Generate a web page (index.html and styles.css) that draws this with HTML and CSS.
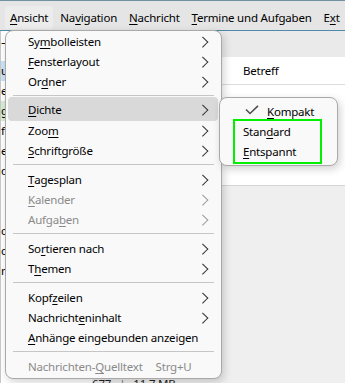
FILE: index.html
```html
<!DOCTYPE html>
<html lang="de">
<head>
<meta charset="utf-8">
<link rel="stylesheet" href="styles.css">
</head>
<body>
<div class="app">
  <div class="menubar">
    <span class="mb-item open"><u>A</u>nsicht</span>
    <span class="mb-item">Na<u>v</u>igation</span>
    <span class="mb-item"><u>N</u>achricht</span>
    <span class="mb-item"><u>T</u>ermine und Aufgaben</span>
    <span class="mb-item">E<u>x</u>t</span>
  </div>
  <div class="panes">
    <div class="folders">
      <div class="f-row">–</div>
      <div class="f-row gap"></div>
      <div class="f-row sel">u</div>
      <div class="f-row">e</div>
      <div class="f-row green">g</div>
      <div class="f-row">f</div>
      <div class="f-row">e</div>
      <div class="f-row">d</div>
      <div class="f-row"></div>
      <div class="f-row"></div>
      <div class="f-row">c</div>
      <div class="f-row">c</div>
      <div class="f-row">n</div>
    </div>
    <div class="threads">
      <div class="toolbar"></div>
      <div class="colheader"><span class="col-subject">Betreff</span></div>
      <div class="rows"></div>
      <div class="preview"></div>
      <div class="status"><span>677</span><span class="sep">|</span><span>11.7 MB</span></div>
    </div>
  </div>

  <div class="menu main-menu">
    <div class="mi">Sy<u>m</u>bolleisten<span class="arrow"></span></div>
    <div class="mi"><u>F</u>ensterlayout<span class="arrow"></span></div>
    <div class="mi">Or<u>d</u>ner<span class="arrow"></span></div>
    <div class="msep"></div>
    <div class="mi hl"><span><u>D</u>ichte</span><span class="arrow"></span></div>
    <div class="mi">Zoo<u>m</u><span class="arrow"></span></div>
    <div class="mi"><u>S</u>chriftgröße<span class="arrow"></span></div>
    <div class="msep"></div>
    <div class="mi"><u>T</u>agesplan<span class="arrow"></span></div>
    <div class="mi dis"><u>K</u>alender<span class="arrow"></span></div>
    <div class="mi dis">Aufga<u>b</u>en<span class="arrow"></span></div>
    <div class="msep"></div>
    <div class="mi">So<u>r</u>tieren nach<span class="arrow"></span></div>
    <div class="mi">T<u>h</u>emen<span class="arrow"></span></div>
    <div class="msep"></div>
    <div class="mi">Kopf<u>z</u>eilen<span class="arrow"></span></div>
    <div class="mi">Nachricht<u>e</u>ninhalt<span class="arrow"></span></div>
    <div class="mi"><u>A</u>nhänge eingebunden anzeigen</div>
    <div class="msep"></div>
    <div class="mi dis">Nachrichten-<u>Q</u>uelltext<span class="shortcut">Strg+U</span></div>
  </div>

  <div class="menu sub-menu">
    <div class="si checked"><svg class="check" width="14" height="10" viewBox="0 0 14 10"><polyline points="1,4.5 5,8.5 13,0.8" fill="none" stroke="#505050" stroke-width="1.6"/></svg><span class="kompakt"><u>K</u>ompakt</span></div>
    <div class="si">Stan<u>d</u>ard</div>
    <div class="si"><u>E</u>ntspannt</div>
    <div class="mark"></div>
  </div>
</div>
</body>
</html>
```

FILE: styles.css
```css
* { box-sizing: border-box; }
html, body { margin: 0; padding: 0; }
body {
  width: 345px;
  height: 383px;
  overflow: hidden;
  font-family: "Segoe UI", "Noto Sans", "Open Sans", sans-serif;
  font-size: 11.5px;
  letter-spacing: -0.2px;
  color: #000;
  background: #f0f0f0;
}
u { text-decoration: underline; text-underline-offset: 2px; text-decoration-thickness: 1px; }

.app { position: relative; width: 345px; height: 383px; overflow: hidden; }

.menubar {
  height: 31px;
  display: flex;
  align-items: center;
  padding: 0 0 0 5px;
  background: #e5e5e5;
  border-top: 1px solid #6f93a3;
  border-bottom: 1px solid #4f8aa6;
  white-space: nowrap;
  overflow: hidden;
}
.mb-item {
  padding: 0 7px 0 5px;
  height: 23px;
  line-height: 23px;
  margin-top: 3px;
}
.mb-item.open { background: #ececec; border-radius: 3px; padding-right: 5px; margin-right: 2px; }

.panes { display: flex; height: 352px; }
.folders {
  width: 150px;
  background: #fff;
  padding-top: 1px;
  border-left: 1px solid #c8c8c8;
}
.f-row { height: 20px; line-height: 20px; }
.f-row.gap { height: 9px; }
.f-row.sel { background: #cde3f5; }
.f-row.green { background: #d7eed3; }

.threads { flex: 1; display: flex; flex-direction: column; }
.toolbar { height: 26px; background: #eaeaea; }
.colheader {
  height: 28px;
  background: #fff;
  border-bottom: 1px solid #dcdcdc;
  display: flex;
  align-items: center;
  padding-left: 93px;
}
.rows { height: 101px; background: #fff; border-bottom: 1px solid #d4d4d4; }
.preview { flex: 1; background: #efefef; }
.status {
  height: 6px;
  background: #efefef;
  display: flex;
  gap: 8px;
  margin-left: -58px;
  line-height: 14px;
  color: #222;
}
.status .sep { color: #777; }

/* menus */
.menu {
  position: absolute;
  background: #f9f9f9;
  border: 1px solid #a9a9a9;
  border-radius: 8px;
  box-shadow: 2px 3px 8px rgba(0,0,0,0.18);
}
.main-menu { left: 5px; top: 30px; width: 217px; height: 349px; padding: 0 0 1px; }
.mi {
  position: relative;
  height: 20px;
  padding-left: 22px;
  white-space: nowrap;
  display: flex;
  align-items: center;
}
.mi.hl {
  height: 24px;
  margin: -3px 3px -1px 2px;
  padding-left: 20px;
  background: #d9d9d9;
  border-radius: 4px;
}
.mi.dis { color: #8a8a8a; }
.arrow {
  position: absolute;
  left: 196px;
  top: 5px;
  width: 8px;
  height: 10px;
}
.mi.hl .arrow { left: 194px; top: 7px; }
.arrow::before {
  content: "";
  position: absolute;
  left: -3px; top: 1.5px;
  width: 6.5px; height: 6.5px;
  border-right: 1px solid #303030;
  border-top: 1px solid #303030;
  transform: rotate(45deg);
}
.mi.dis .arrow::before { border-color: #9a9a9a; }
.shortcut { margin-left: 13px; }
.msep { height: 9px; display: flex; align-items: center; padding: 0 7px; }
.msep::after { content: ""; display: block; flex: 1; height: 1px; background: #c6c6c6; }

.sub-menu { left: 219px; top: 97px; width: 119px; height: 69px; padding: 3px 0 0; }
.si {
  height: 20px;
  padding-left: 23px;
  display: flex;
  align-items: center;
  white-space: nowrap;
}
.si.checked { padding-left: 25px; }
.check { margin-right: 8px; margin-top: -3px; }
.mark {
  position: absolute;
  left: 13px; top: 21px;
  width: 89px; height: 45px;
  border: 2px solid #00f000;
}
```
